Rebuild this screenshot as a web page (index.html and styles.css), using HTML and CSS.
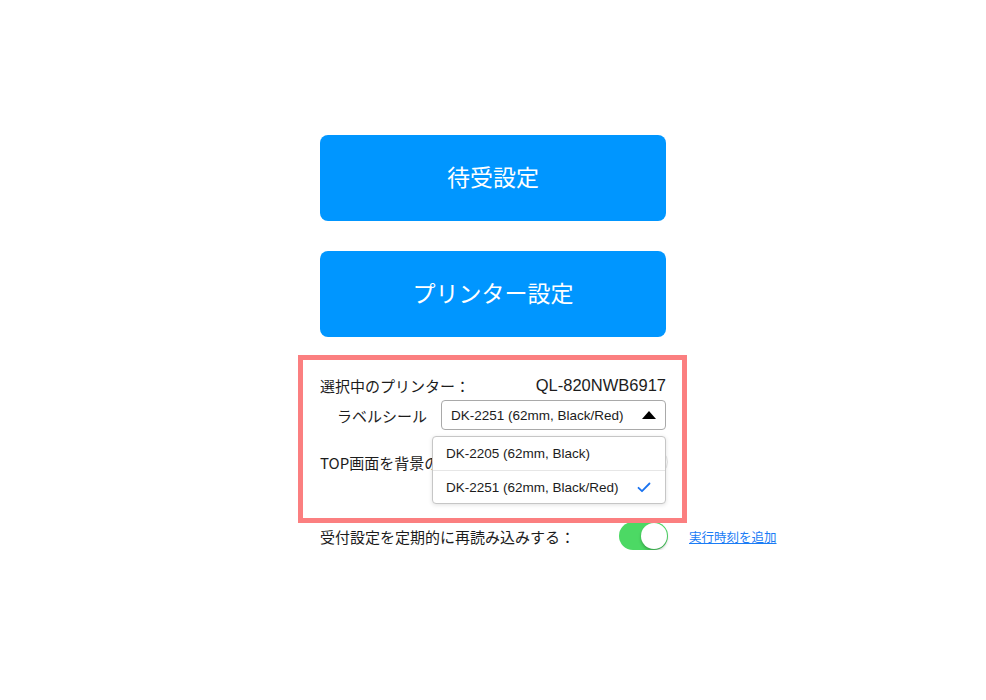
FILE: index.html
```html
<!DOCTYPE html>
<html lang="ja">
<head>
<meta charset="utf-8">
<title>設定</title>
<link rel="stylesheet" href="styles.css">
</head>
<body>
<main class="page">
  <button class="big-btn">待受設定</button>
  <button class="big-btn second">プリンター設定</button>

  <section class="settings">
    <div class="row row-printer">
      <span class="label">選択中のプリンター：</span>
      <span class="value">QL-820NWB6917</span>
    </div>

    <div class="row row-label">
      <span class="label-right">ラベルシール</span>
      <div class="select-wrap">
        <div class="select">
          <span>DK-2251 (62mm, Black/Red)</span>
          <span class="tri"></span>
        </div>
        <ul class="dropdown">
          <li class="item">DK-2205 (62mm, Black)</li>
          <li class="item selected">DK-2251 (62mm, Black/Red)
            <svg class="check" width="14" height="11" viewBox="0 0 14 11"><path d="M1.5 5.8 L5 9.2 L12.5 1.5" fill="none" stroke="#1a73f0" stroke-width="1.8" stroke-linecap="round" stroke-linejoin="round"/></svg>
          </li>
        </ul>
      </div>
    </div>

    <div class="row toggle-row row-top">
      <span class="label">TOP画面を背景の色で表示する：</span>
      <span class="toggle off"><span class="knob"></span></span>
    </div>

    <div class="row toggle-row row-reload">
      <span class="label">受付設定を定期的に再読み込みする：</span>
      <span class="toggle on"><span class="knob"></span></span>
      <a class="link" href="#">実行時刻を追加</a>
    </div>

    <div class="highlight"></div>
  </section>
</main>
</body>
</html>
```

FILE: styles.css
```css
* { box-sizing: border-box; }

body {
  margin: 0;
  background: #ffffff;
  font-family: "Liberation Sans", "Noto Sans CJK JP", sans-serif;
  color: #1c1c1c;
}

.page {
  width: 346px;
  margin: 135px auto 0;
  display: flex;
  flex-direction: column;
}

.big-btn {
  height: 86px;
  border: none;
  border-radius: 8px;
  background: #0096ff;
  color: #ffffff;
  font-family: "Noto Sans CJK JP", sans-serif;
  font-size: 23px;
  font-weight: 400;
  padding: 0 0 5px;
}

.big-btn.second { margin-top: 30px; }

.settings {
  position: relative;
  margin-top: 37px;
  font-size: 15px;
}

.row {
  display: flex;
  align-items: center;
}

.label {
  font-family: "Noto Sans CJK JP", sans-serif;
  font-size: 15px;
  white-space: nowrap;
}

.row-printer {
  height: 22px;
  justify-content: space-between;
}

.row-printer .value {
  font-size: 16.5px;
}

.row-label {
  margin-top: 4px;
  height: 30px;
}

.label-right {
  width: 107px;
  text-align: right;
  font-family: "Noto Sans CJK JP", sans-serif;
  font-size: 15px;
  margin-right: 14px;
}

.select-wrap {
  position: relative;
  width: 225px;
  height: 30px;
}

.select {
  height: 30px;
  border: 1px solid #a9a9a9;
  border-radius: 4px;
  display: flex;
  align-items: center;
  justify-content: space-between;
  padding: 0 9px 0 9px;
  font-size: 13.5px;
  background: #fff;
}

.tri {
  width: 0;
  height: 0;
  border-left: 7px solid transparent;
  border-right: 7px solid transparent;
  border-bottom: 8px solid #000;
}

.dropdown {
  position: absolute;
  z-index: 5;
  top: 36px;
  left: -9px;
  width: 234px;
  margin: 0;
  padding: 0;
  list-style: none;
  background: #fff;
  border: 1px solid #c6c6c6;
  border-radius: 4px;
  box-shadow: 0 1px 4px rgba(0, 0, 0, 0.12);
}

.item {
  height: 33px;
  display: flex;
  align-items: center;
  justify-content: space-between;
  padding: 0 14px 0 13px;
  font-size: 13.5px;
}

.item + .item { border-top: 1px solid #e6e6e6; }

.check { margin-top: 1px; }

.toggle-row {
  display: grid;
  grid-template-columns: 278px 49px auto;
  column-gap: 21px;
  align-items: center;
}

.row-top { margin-top: 18px; height: 28px; }
.row-reload { margin-top: 46px; height: 28px; }

.toggle {
  position: relative;
  display: block;
  width: 49px;
  height: 28px;
  border-radius: 14px;
}

.toggle.on { background: #4cd964; }
.toggle.off { background: #fff; border: 1.5px solid #e3e3e3; }

.knob {
  position: absolute;
  top: 1px;
  width: 26px;
  height: 26px;
  border-radius: 50%;
  background: #fff;
  box-shadow: 0 2px 3px rgba(0, 0, 0, 0.25);
}

.toggle.on .knob { right: 1px; }
.toggle.off .knob { left: 0; top: 0; }

.link {
  font-family: "Noto Sans CJK JP", sans-serif;
  font-size: 12.5px;
  color: #1a7cf5;
  text-decoration: underline;
  white-space: nowrap;
}

.highlight {
  position: absolute;
  top: -19px;
  left: -22px;
  width: 389px;
  height: 168px;
  border: 5px solid #fb7f80;
  pointer-events: none;
  z-index: 6;
}
```
